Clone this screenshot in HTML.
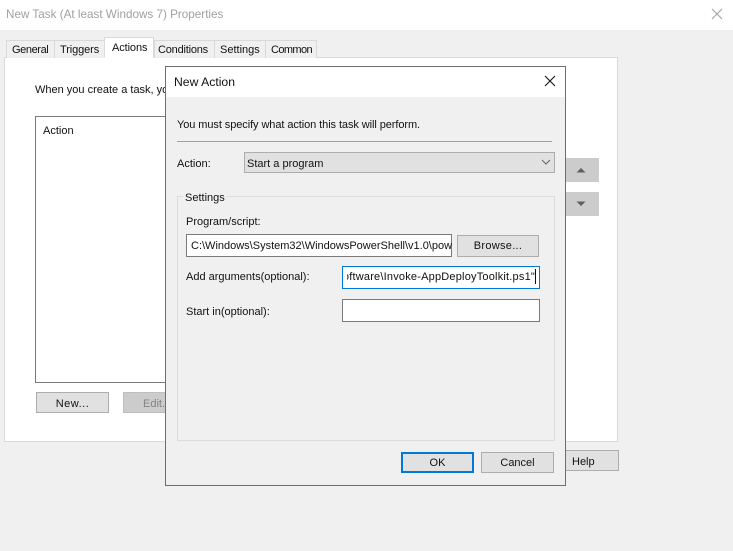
<!DOCTYPE html>
<html>
<head>
<meta charset="utf-8">
<style>
html,body{margin:0;padding:0}
body{width:733px;height:551px;overflow:hidden;background:#f0f0f0;position:relative;font-family:"Liberation Sans",sans-serif;font-size:11px;color:#111}
div,span.t{position:absolute;box-sizing:border-box}
.t{white-space:nowrap;line-height:14px}
.tab{background:#f0f0f0;border:1px solid #d9d9d9;border-bottom:none}
.btn{background:#e1e1e1;border:1px solid #adadad;text-align:center;white-space:nowrap}
.in{background:#fff;border:1px solid #7a7a7a;overflow:hidden;white-space:nowrap}
</style>
</head>
<body>
<div style="left:0;top:0;width:733px;height:30px;background:#fff"></div>
<span class="t" style="left:6px;top:8px;color:#a0a0a0;font-size:11.7px">New Task (At least Windows 7) Properties</span>
<svg style="position:absolute;left:711px;top:8px" width="12" height="12"><path d="M1 1L11 11M11 1L1 11" stroke="#a0a0a0" stroke-width="1" fill="none"/></svg>

<div style="left:4px;top:57px;width:614px;height:385px;background:#fff;border:1px solid #d9d9d9"></div>
<div class="tab" style="left:6px;top:40px;width:49px;height:18px"></div>
<span class="t" style="left:12px;top:43px;letter-spacing:-.4px">General</span>
<div class="tab" style="left:54px;top:40px;width:51px;height:18px"></div>
<span class="t" style="left:60px;top:43px;letter-spacing:-.1px">Triggers</span>
<div class="tab" style="left:104px;top:37px;width:50px;height:21px;background:#fff;border-bottom:1px solid #fff"></div>
<span class="t" style="left:112px;top:41px;letter-spacing:-.1px">Actions</span>
<div class="tab" style="left:154px;top:40px;width:61px;height:18px"></div>
<span class="t" style="left:158px;top:43px;letter-spacing:-.2px">Conditions</span>
<div class="tab" style="left:214px;top:40px;width:52px;height:18px"></div>
<span class="t" style="left:220px;top:43px">Settings</span>
<div class="tab" style="left:265px;top:40px;width:52px;height:18px"></div>
<span class="t" style="left:271px;top:43px;letter-spacing:-.6px">Common</span>

<span class="t" style="left:35px;top:83px">When you create a task, you</span>
<div style="left:35px;top:116px;width:140px;height:267px;background:#fff;border:1px solid #7a7a7a"></div>
<span class="t" style="left:43px;top:124px">Action</span>
<div class="btn" style="left:36px;top:392px;width:73px;height:21px;line-height:23px;letter-spacing:.5px">New...</div>
<div style="left:123px;top:392px;width:50px;height:21px;background:#ccc;border:1px solid #bfbfbf;color:#838383;line-height:23px;padding-left:19px">Edit...</div>

<div style="left:560px;top:158px;width:39px;height:24px;background:#ccc"></div>
<svg style="position:absolute;left:576px;top:167px" width="10" height="6"><path d="M.5 5.5L5 1L9.5 5.5Z" fill="#5f5f5f"/></svg>
<div style="left:560px;top:192px;width:39px;height:24px;background:#ccc"></div>
<svg style="position:absolute;left:576px;top:201px" width="10" height="6"><path d="M.5 .5L9.5 .5L5 5Z" fill="#5f5f5f"/></svg>
<div class="btn" style="left:560px;top:450px;width:59px;height:21px;line-height:23px;text-align:left;padding-left:11px">Help</div>

<!-- dialog -->
<div style="left:165px;top:66px;width:401px;height:420px;background:#f0f0f0;border:1px solid #6e6e6e"></div>
<div style="left:166px;top:67px;width:399px;height:30px;background:#fff"></div>
<span class="t" style="left:174px;top:75px;font-size:12.2px">New Action</span>
<svg style="position:absolute;left:544px;top:75px" width="12" height="12"><path d="M1 1L11 11M11 1L1 11" stroke="#111" stroke-width="1.1" fill="none"/></svg>
<span class="t" style="left:177px;top:118px;letter-spacing:-.08px">You must specify what action this task will perform.</span>
<div style="left:177px;top:141px;width:375px;height:1px;background:#a0a0a0"></div>
<span class="t" style="left:177px;top:157px">Action:</span>
<div style="left:244px;top:152px;width:311px;height:21px;background:#e1e1e1;border:1px solid #adadad"></div>
<span class="t" style="left:247px;top:157px">Start a program</span>
<svg style="position:absolute;left:541px;top:159px" width="10" height="7"><path d="M1 1L5 5L9 1" stroke="#666" stroke-width="1" fill="none"/></svg>

<div style="left:177px;top:196px;width:378px;height:245px;border:1px solid #dcdcdc"></div>
<div style="left:183px;top:190px;width:44px;height:14px;background:#f0f0f0"></div>
<span class="t" style="left:185px;top:191px">Settings</span>
<span class="t" style="left:186px;top:215px">Program/script:</span>
<div class="in" style="left:186px;top:234px;width:266px;height:23px"></div>
<span class="t" style="left:191px;top:239px">C:\Windows\System32\WindowsPowerShell\v1.0\pow</span>
<div class="btn" style="left:457px;top:235px;width:82px;height:22px;line-height:21px;letter-spacing:.3px">Browse...</div>
<span class="t" style="left:186px;top:270px">Add arguments(optional):</span>
<div class="in" style="left:342px;top:266px;width:198px;height:23px;border-color:#0078d7"></div>
<div style="left:347px;top:267px;width:192px;height:21px;overflow:hidden">
<span class="t" style="right:4px;top:3px;letter-spacing:.2px">Software\Invoke-AppDeployToolkit.ps1"</span>
</div>
<div style="left:535px;top:269px;width:1px;height:15px;background:#111"></div>
<span class="t" style="left:186px;top:305px">Start in(optional):</span>
<div class="in" style="left:342px;top:299px;width:198px;height:23px"></div>

<div class="btn" style="left:401px;top:452px;width:73px;height:21px;line-height:19px;border:2px solid #0078d7">OK</div>
<div class="btn" style="left:481px;top:452px;width:73px;height:21px;line-height:21px">Cancel</div>
</body>
</html>
